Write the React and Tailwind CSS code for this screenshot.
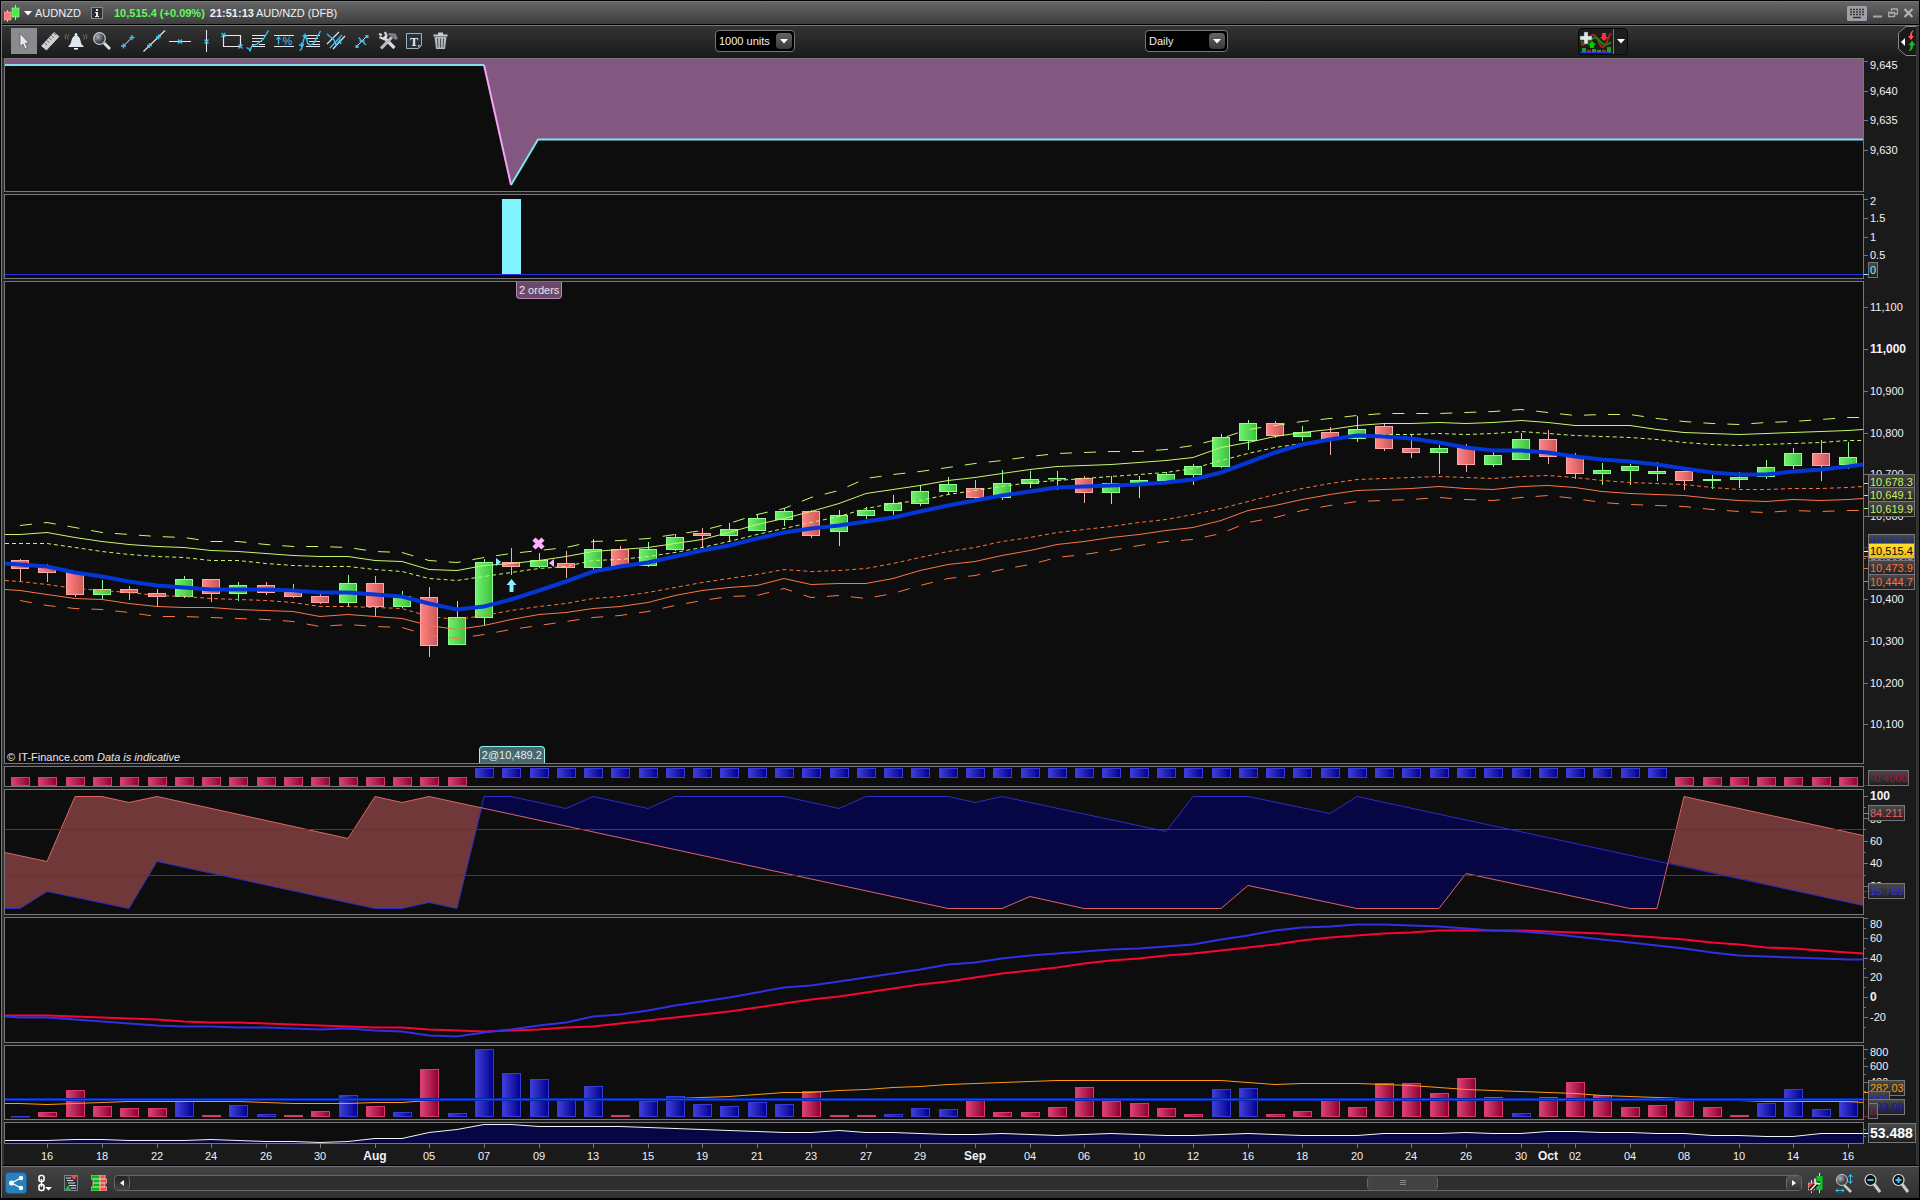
import { useMemo } from 'react';

const LEFT = 5;
const RIGHT = 1863;
const barX = (i) => Math.round(20.2 + 27.28 * i);

// [direction, high, body top, body bottom, low]
const candles = [
  ['d', 559, 560, 569, 581], ['d', 564, 567, 573, 582], ['d', 571, 572, 595, 597], ['u', 580, 589, 595, 599],
  ['d', 586, 589, 593, 600], ['d', 589, 593, 597, 606], ['u', 576, 579, 597, 598], ['d', 579, 579, 594, 602],
  ['u', 582, 585, 594, 601], ['d', 582, 585, 593, 595], ['d', 584, 592, 597, 598], ['d', 594, 596, 603, 604],
  ['u', 575, 583, 603, 606], ['d', 576, 583, 607, 616], ['u', 591, 596, 607, 608], ['d', 587, 597, 646, 657],
  ['u', 601, 617, 645, 645], ['u', 559, 562, 618, 626], ['d', 548, 562, 567, 575], ['u', 553, 560, 567, 568],
  ['d', 551, 563, 568, 578], ['u', 539, 549, 568, 570], ['d', 546, 549, 566, 567], ['u', 542, 549, 566, 567],
  ['u', 534, 537, 550, 551], ['d', 528, 533, 536, 548], ['u', 523, 529, 536, 541], ['u', 514, 518, 531, 531],
  ['u', 508, 511, 520, 526], ['d', 510, 511, 536, 538], ['u', 510, 515, 532, 546], ['u', 507, 510, 516, 519],
  ['u', 495, 503, 511, 515], ['u', 485, 491, 504, 506], ['u', 477, 484, 492, 494], ['d', 480, 488, 498, 499],
  ['u', 470, 483, 498, 500], ['u', 471, 479, 484, 488], ['u', 471, 478, 479, 490], ['d', 476, 478, 493, 503],
  ['u', 476, 483, 493, 504], ['u', 476, 480, 485, 498], ['u', 472, 474, 481, 481], ['u', 464, 466, 475, 485],
  ['u', 434, 437, 467, 468], ['u', 420, 423, 441, 450], ['d', 421, 423, 436, 438], ['u', 426, 432, 437, 441],
  ['d', 427, 432, 439, 455], ['u', 416, 429, 439, 442], ['d', 424, 426, 449, 451], ['d', 435, 448, 453, 458],
  ['u', 445, 448, 453, 474], ['d', 444, 448, 465, 472], ['u', 450, 455, 465, 467], ['u', 433, 439, 460, 460],
  ['d', 430, 439, 457, 464], ['d', 453, 456, 474, 479], ['u', 463, 470, 474, 485], ['u', 464, 466, 471, 485],
  ['u', 462, 471, 474, 481], ['d', 470, 471, 481, 490], ['u', 475, 479, 481, 489], ['u', 472, 477, 480, 488],
  ['u', 460, 467, 477, 479], ['u', 448, 453, 466, 469], ['d', 440, 453, 466, 481], ['u', 442, 457, 465, 469],
];

const upperOuter = [525, 522, 527, 532, 534, 536, 537, 541, 541, 544, 546, 546, 547, 551, 552, 560, 562, 557, 553, 550, 547, 541, 540, 538, 534, 530, 523, 514, 508, 497, 490, 478, 474, 471, 467, 463, 460, 456, 453, 452, 451, 451, 449, 445, 438, 429, 425, 421, 418, 415, 413, 413, 413, 412, 411, 409, 412, 415, 414, 414, 418, 421, 423, 424, 422, 421, 419, 417];
const upperMid = [534, 532, 537, 541, 544, 546, 547, 550, 551, 553, 555, 556, 556, 560, 561, 569, 570, 565, 563, 560, 556, 551, 549, 547, 543, 539, 532, 524, 518, 511, 503, 493, 489, 485, 480, 477, 473, 469, 466, 465, 464, 462, 460, 457, 447, 442, 436, 432, 429, 425, 423, 423, 422, 423, 422, 420, 422, 425, 425, 425, 429, 432, 433, 434, 433, 432, 431, 430];
const upperInner = [543, 543, 547, 551, 554, 556, 557, 560, 560, 563, 565, 566, 566, 569, 571, 578, 580, 576, 572, 568, 566, 560, 559, 556, 552, 547, 541, 534, 528, 522, 516, 508, 503, 500, 494, 490, 486, 482, 480, 478, 476, 474, 472, 468, 460, 453, 447, 443, 438, 435, 434, 434, 433, 434, 433, 431, 433, 435, 436, 437, 439, 442, 444, 445, 444, 443, 442, 440];
const average = [564, 566, 572, 576, 581, 585, 587, 589, 589, 589, 590, 592, 592, 594, 596, 603, 609, 606, 599, 590, 581, 571, 566, 562, 556, 550, 545, 538, 532, 528, 525, 521, 517, 511, 505, 500, 495, 491, 487, 486, 485, 484, 482, 479, 472, 462, 452, 444, 439, 435, 436, 438, 442, 447, 450, 450, 452, 456, 459, 461, 464, 468, 472, 474, 474, 471, 469, 466];
const lowerInner = [581, 584, 588, 590, 592, 595, 596, 598, 599, 600, 602, 606, 606, 607, 608, 616, 619, 615, 610, 606, 603, 598, 596, 592, 587, 582, 578, 574, 569, 571, 570, 568, 563, 557, 551, 547, 541, 537, 532, 529, 526, 522, 519, 514, 508, 501, 494, 488, 483, 479, 478, 477, 476, 477, 478, 476, 475, 477, 480, 482, 483, 484, 487, 489, 489, 488, 488, 487];
const lowerMid = [590, 594, 598, 599, 603, 606, 607, 607, 609, 610, 611, 616, 614, 616, 618, 625, 629, 625, 619, 614, 612, 608, 606, 602, 595, 590, 587, 585, 578, 584, 583, 583, 578, 570, 564, 561, 555, 550, 544, 541, 537, 534, 530, 527, 520, 510, 505, 499, 494, 490, 489, 488, 486, 488, 489, 486, 485, 487, 491, 493, 494, 495, 498, 500, 501, 499, 500, 499];
const lowerOuter = [600, 605, 608, 609, 612, 616, 616, 617, 618, 619, 621, 626, 624, 626, 627, 635, 638, 634, 629, 625, 621, 617, 615, 611, 605, 600, 596, 595, 588, 597, 595, 598, 593, 585, 578, 575, 569, 564, 557, 554, 550, 545, 541, 539, 533, 522, 517, 510, 505, 501, 500, 499, 497, 499, 500, 497, 495, 498, 502, 504, 505, 506, 509, 511, 512, 510, 511, 510];

const trendSlow = [1015, 1015, 1016, 1017, 1018, 1019, 1021, 1022, 1022, 1023, 1024, 1025, 1026, 1027, 1027, 1029, 1030, 1031, 1030, 1029, 1027, 1026, 1023, 1020, 1017, 1014, 1011, 1007, 1003, 999, 996, 992, 988, 984, 981, 977, 973, 970, 967, 963, 960, 958, 955, 953, 950, 947, 944, 940, 937, 935, 933, 932, 930, 930, 930, 930, 931, 932, 933, 935, 937, 939, 942, 944, 947, 948, 950, 952];
const trendFast = [1017, 1017, 1019, 1021, 1023, 1025, 1026, 1026, 1027, 1027, 1028, 1029, 1028, 1030, 1031, 1035, 1036, 1032, 1029, 1025, 1022, 1016, 1014, 1010, 1005, 1001, 997, 992, 987, 985, 981, 977, 973, 969, 964, 962, 958, 955, 953, 951, 949, 948, 946, 944, 939, 935, 930, 927, 926, 924, 924, 925, 926, 928, 930, 931, 933, 936, 939, 942, 945, 948, 952, 955, 956, 957, 958, 959];

const volumeTops = [1116, 1112, 1090, 1106, 1108, 1108, 1100, 1115, 1105, 1114, 1115, 1111, 1095, 1106, 1112, 1069, 1113, 1049, 1073, 1079, 1099, 1086, 1115, 1101, 1096, 1104, 1106, 1102, 1104, 1091, 1115, 1115, 1114, 1108, 1109, 1098, 1112, 1112, 1107, 1087, 1101, 1103, 1108, 1114, 1089, 1088, 1114, 1111, 1099, 1107, 1083, 1083, 1093, 1078, 1097, 1113, 1097, 1082, 1095, 1107, 1105, 1100, 1107, 1115, 1103, 1089, 1109, 1101];
const volumeUp = new Set([0, 6, 8, 9, 12, 14, 16, 17, 18, 19, 20, 21, 23, 24, 25, 26, 27, 28, 32, 33, 34, 44, 45, 55, 64, 65, 66, 67]);
const volumeAverage = [1103, 1104, 1103, 1102, 1101, 1101, 1101, 1101, 1101, 1102, 1103, 1103, 1103, 1102, 1102, 1100, 1099, 1099, 1099, 1099, 1099, 1098, 1098, 1098, 1098, 1097, 1096, 1094, 1092, 1092, 1090, 1089, 1087, 1086, 1084, 1083, 1082, 1081, 1080, 1080, 1080, 1080, 1080, 1080, 1080, 1082, 1084, 1083, 1083, 1083, 1084, 1085, 1087, 1089, 1090, 1091, 1092, 1093, 1095, 1096, 1097, 1098, 1099, 1100, 1101, 1101, 1101, 1101];
const strength = [1140, 1140, 1139, 1139, 1140, 1140, 1140, 1139, 1140, 1141, 1141, 1142, 1141, 1138, 1138, 1132, 1129, 1124, 1124, 1126, 1126, 1126, 1126, 1127, 1128, 1129, 1130, 1131, 1132, 1132, 1130, 1132, 1132, 1133, 1134, 1134, 1133, 1134, 1135, 1134, 1133, 1134, 1135, 1135, 1134, 1133, 1134, 1135, 1135, 1135, 1133, 1133, 1133, 1132, 1133, 1133, 1131, 1131, 1132, 1132, 1133, 1133, 1135, 1135, 1136, 1136, 1133, 1133];

// aroon turning points: [bar index, y]
const aroonDown = [[-0.56, 852], [1, 861], [2, 796], [3, 796], [4, 802], [5, 796], [12, 838], [13, 796], [14, 802], [15, 796], [34, 908], [36, 908], [37, 896], [39, 908], [44, 908], [45, 885], [49, 908], [52, 908], [53, 873], [59, 908], [60, 908], [61, 796], [67.55, 835]];
const aroonUp = [[-0.56, 908], [0, 908], [1, 891], [4, 908], [5, 861], [13, 908], [14, 908], [15, 902], [16, 908], [17, 796], [18, 796], [20, 808], [21, 796], [23, 808], [24, 796], [28, 796], [30, 808], [31, 796], [34, 796], [35, 802], [36, 796], [42, 831], [43, 796], [45, 796], [48, 813], [49, 796], [67.55, 905]];

const toPoints = (pairs) => pairs.map(([i, y]) => `${barX(i)},${y + 0.5}`);
const seriesPoints = (ys, first, last) => {
  const pts = ys.map((y, i) => `${barX(i)},${y + 0.5}`);
  if (first) pts.unshift(`${LEFT},${first + 0.5}`);
  if (last) pts.push(`${RIGHT},${last + 0.5}`);
  return pts.join(' ');
};

const between = (a, b, from, to, start, end) => {
  const pick = (list) => toPoints(list.filter(([i]) => i > from && i < to));
  return [start, ...pick(a), end, ...pick(b).reverse()].filter(Boolean).join(' ');
};

const dates = [
  [1, '16'], [3, '18'], [5, '22'], [7, '24'], [9, '26'], [11, '30'], [13, 'Aug'], [15, '05'], [17, '07'], [19, '09'], [21, '13'],
  [23, '15'], [25, '19'], [27, '21'], [29, '23'], [31, '27'], [33, '29'], [35, 'Sep'], [37, '04'], [39, '06'], [41, '10'], [43, '12'],
  [45, '16'], [47, '18'], [49, '20'], [51, '24'], [53, '26'], [55, '30'], [56, 'Oct'], [57, '02'], [59, '04'], [61, '08'], [63, '10'],
  [65, '14'], [67, '16'],
];

function Line({ points, color, width = 1, dash }) {
  return <polyline points={points} fill="none" stroke={color} strokeWidth={width} strokeDasharray={dash} />;
}

function Axis({ top, height, labels = [], ticks = [], tags = [] }) {
  return (
    <svg className="block h-full w-[52px] shrink-0" viewBox={`0 ${top} 52 ${height}`} preserveAspectRatio="none" fontSize="11">
      {ticks.map((y) => <rect key={y} x="0" y={y} width="2" height="1" fill="#77777b" />)}
      {labels.map(([text, y, bold, tickY]) => (
        <g key={text}>
          <rect x="0" y={tickY ?? y} width="4" height="1" fill="#77777b" />
          <text x="6" y={y + 4} fill="#f2f2f8" fontSize={bold ? 12 : 11} fontWeight={bold ? 700 : 400}>{text}</text>
        </g>
      ))}
      {tags.map(({ text, y, w = 46, color, tick, yellow, big }) => (
        <g key={text}>
          {tick && <rect x="0" y={tick} width="4" height="1" fill={color} />}
          <rect x="4.5" y={y + 0.5} width={w} height={big ? 19 : 15} fill={yellow ? 'url(#gold)' : 'url(#tag)'} stroke="#77777b" />
          <text x="6" y={y + (big ? 15 : 12)} fill={yellow ? '#000' : color} fontSize={big ? 14 : 11} fontWeight={big ? 700 : 400}>{text}</text>
        </g>
      ))}
    </svg>
  );
}

function Panel({ size, top, height, axis, overlay, children }) {
  return (
    <div className={`flex ${size}`}>
      <div className="relative min-w-0 flex-1 border border-[#77777b] bg-[#0d0d0d]">
        <svg className="block size-full" viewBox={`${LEFT} ${top} 1858 ${height}`} preserveAspectRatio="none">{children}</svg>
        {overlay}
      </div>
      <Axis top={top - 1} height={height + 2} {...axis} />
    </div>
  );
}

const C = '#35c5f5';
const W = '#e4e6ea';
const Cross = ({ x, y }) => <path d={`M${x - 2} ${y - 2}l4 4m0-4l-4 4`} stroke={C} strokeWidth="1.3" />;
const Plus = ({ x, y }) => <path d={`M${x - 2.5} ${y}h5m-2.5-2.5v5`} stroke={C} strokeWidth="1.3" />;

const tools = [
  ['Select', <path d="M9 5.500v13l3-2.500 2 5 2.300-1-2-5h3.700z" fill="#e6e9ee" stroke="#444" strokeWidth=".6" />],
  ['Measure', <g><path d="M4.500 18L17 4.500l5 4L9.500 22z" fill="#cdd1d6" stroke="#f5f5f5" strokeWidth=".6" /><path d="M7.500 15l2.500 2m-.2-4.500l2.500 2m-.2-4.500l2.500 2m-.2-4.500l2.500 2m-.2-4.500l2.500 2" stroke="#5b6066" /></g>],
  ['Alerts', <g><path d="M5.500 18c4-2 1.500-9 7.500-11 6 2 3.500 9 7.500 11v1h-15z" fill="#dfe6f0" /><path d="M11 20h4v1.500h-4z" fill="#fff" /><circle cx="13" cy="6.500" r="1.300" fill="#fff" /><path d="M6 6.500q-2 2-1 5M3.500 6q-2 2-1 5M20 6.500q2 2 1 5M22.500 6q2 2 1 5" fill="none" stroke="#7b8188" strokeWidth=".8" /></g>],
  ['Zoom', <g><path d="M15 15l6 6" stroke="#ddd" strokeWidth="3" /><circle cx="10.500" cy="10.500" r="5.800" fill="url(#lens)" stroke="#c9ccd0" strokeWidth="1.200" /></g>],
  ['Segment', <g><path d="M8 18.500l9-9" stroke={W} /><Plus x={8.5} y={18} /><Plus x={17} y={9.5} /></g>],
  ['Line', <g><path d="M2.500 23.500L24 2.500" stroke={W} strokeWidth="1.200" /><Plus x={8.5} y={17.5} /><Plus x={17.5} y={9} /></g>],
  ['Horizontal line', <g><path d="M2 13.500h22" stroke={W} /><Cross x={13} y={13.5} /></g>],
  ['Vertical line', <g><path d="M13.500 2v22" stroke={W} /><Cross x={13.5} y={13.5} /></g>],
  ['Rectangle', <g><path d="M4.500 7.500h17v11h-17z" fill="none" stroke={W} strokeWidth="1.200" /><Cross x={4.5} y={7} /><Cross x={21.5} y={18.5} /></g>],
  ['Fibonacci retracement', <g><path d="M7 7.500h13m-13 3h12m-12 3h10m-10 3h4m3 0h6m-13 2h13" stroke={W} /><path d="M1.500 20q3-.5 3.500 3.500 1-6 4-6.500t4-1.500 5-4L23.500 2.500" fill="none" stroke={C} strokeWidth="1.400" /></g>],
  ['Percent', <g><path d="M3 7.500h20M3 18.500h20" stroke={W} /><path d="M7.500 16.500v-7m-2 2l2-2.500 2 2.500" fill="none" stroke={C} strokeWidth="1.200" /><text x="11.500" y="17" fontSize="11" fill={C}>%</text></g>],
  ['Fibonacci extension', <g><path d="M9 7.500h14m-14 3h12m-9 3h11m-11 3h11m-14 2h14" stroke={W} /><path d="M2.500 22q2 1 3-5t2.500-9q2 2 2.500 7 2 3 5 1t3-4l5-9" fill="none" stroke={C} strokeWidth="1.400" /><Plus x={4.5} y={17} /><Plus x={8} y={8} /></g>],
  ['Channel', <g><path d="M4 16L16 4M10 21L22 8" stroke={W} strokeWidth="1.200" /><path d="M4 6l7 6 2 5 4-5 1 4M7 20L19 7" stroke={C} fill="none" strokeWidth="1.300" /></g>],
  ['Regression', <g><path d="M8 18L18 8" stroke={W} /><path d="M6.500 17h3v3h-3zM16.500 7h3v3h-3z" fill={C} /><path d="M9.500 9.500l7.500 7.500M10.500 13h5" stroke={C} strokeWidth="1.300" /></g>],
  ['Settings', <g><path d="M8.500 9l11 11" stroke="#d8dade" strokeWidth="3.200" /><path d="M4.500 9l4 2 3-3-1.500-4M4 6l3 1" fill="none" stroke="#d8dade" strokeWidth="2.200" /><path d="M6 20.500L17 9" stroke="#b9bdc2" strokeWidth="3.200" /><path d="M13.500 5l7 .5 2.500 5-3 1.500-3-4-4-1z" fill="#7d8187" /></g>],
  ['Text', <g><path d="M5.500 5.500h15v12l-3 3h-12z" fill="#27313a" stroke="#9eb0bd" /><path d="M20 17h-3v3z" fill="#9eb0bd" /><text x="13" y="17.500" textAnchor="middle" fontSize="12" fontWeight="700" fontFamily="Liberation Serif, serif" fill="#e8edf0">T</text></g>],
  ['Delete', <g><path d="M7.500 9h12l-1.500 12h-9z" fill="#b4b7bb" /><path d="M6.500 6.500h14v2h-14zM11 4.500h5v2h-5z" fill="#c9ccd0" /><path d="M10.500 10.500l.5 9M13.500 10.500v9M16.500 10.500l-.5 9" stroke="#4b4e52" /></g>],
];

function DropDown({ label, value, width }) {
  return (
    <label className={`relative block h-[22px] shrink-0 ${width}`}>
      <select aria-label={label} defaultValue={value} className="block size-full appearance-none rounded-sm border border-[#77777b] bg-black pl-[3px] text-[11px] text-[#f0f0f5] outline-none">
        <option>{value}</option>
      </select>
      <span className="pointer-events-none absolute top-[3px] right-[3px] flex h-4 w-4 items-center justify-center rounded-sm bg-linear-to-b from-[#666] to-[#3a3a3a]">
        <svg width="8" height="5"><path d="M0 0h8L4 4.500z" fill="#fff" /></svg>
      </span>
    </label>
  );
}

function TitleBar() {
  return (
    <header className="flex h-[22px] items-center bg-linear-to-b from-[#666] to-[#3d3d3d] pr-[6px] pl-[2px] text-[11px] text-[#eef0f5]">
      <svg width="16" height="18" viewBox="0 0 16 18">
        <path d="M3.500 6v12M11.500 1v15" stroke="#ccc" />
        <rect x="0" y="8" width="7" height="8" fill="#f77" stroke="#fbb" strokeWidth=".6" />
        <rect x="8" y="4" width="7" height="9" fill="#4e4" stroke="#afa" strokeWidth=".6" />
      </svg>
      <svg className="ml-1" width="8" height="5"><path d="M0 0h8L4 4.500z" fill="#fff" /></svg>
      <span className="ml-[3px] w-[45px]">AUDNZD</span>
      <button aria-label="Info" className="ml-[11px] flex h-3 w-3 items-center justify-center border border-[#8a8a90] bg-[#2c2c34]">
        <svg width="6" height="8"><path d="M2 0h2v2H2zM1 3h3v4h1v1H1V7h1V4H1z" fill="#e8e8ee" /></svg>
      </button>
      <span className="ml-[11px] font-bold text-[#5dfc5d]">10,515.4 (+0.09%)</span>
      <span className="ml-[5px] font-bold">21:51:13</span>
      <span className="ml-[2px]">AUD/NZD (DFB)</span>
      <div className="ml-auto flex items-center gap-[6px]">
        <button aria-label="Keyboard">
          <svg className="block" width="20" height="15" viewBox="0 0 20 15">
            <rect width="20" height="15" rx="1.500" fill="#a0a0a8" />
            <path d="M3 3.500h14M3 6h14M3 8.500h14" stroke="#333" strokeWidth="1.500" strokeDasharray="2 1" />
            <path d="M6 11.500h8" stroke="#333" strokeWidth="1.500" />
          </svg>
        </button>
        <button aria-label="Minimize"><svg className="block" width="9" height="10"><path d="M0 8.500h9" stroke="#a8a8ae" strokeWidth="2" /></svg></button>
        <button aria-label="Restore">
          <svg className="block" width="10" height="10"><path d="M3.500 3V1h6v5H7M.5 4.500h6v4h-6zM0 5h7" fill="none" stroke="#a8a8ae" strokeWidth="1.400" /></svg>
        </button>
        <button aria-label="Close"><svg className="block" width="9" height="10"><path d="M.5 1l8 8m0-8l-8 8" stroke="#b4b4ba" strokeWidth="2" /></svg></button>
      </div>
    </header>
  );
}

function Toolbar() {
  return (
    <div className="flex h-8 items-center bg-linear-to-b from-[#343434] to-[#1a1a1a] pb-[2px] pl-[9px]">
      {tools.map(([name, icon], i) => (
        <button key={name} aria-label={name} title={name} className={`size-[26px] shrink-0 ${i === 0 ? 'bg-[#8b8a90]' : ''}`}>
          <svg className="block" width="26" height="26" viewBox="0 0 26 26">{icon}</svg>
        </button>
      ))}
      <div className="grow-[262]" />
      <DropDown label="Units" value="1000 units" width="w-20" />
      <div className="grow-[350]" />
      <DropDown label="Timeframe" value="Daily" width="w-[83px]" />
      <div className="grow-[350]" />
      <div className="flex h-[27px] shrink-0 items-center rounded-sm border border-[#0a0a0a] bg-[#1d1d1d]">
        <button aria-label="Add indicator">
          <svg className="block" width="34" height="25" viewBox="0 0 34 25">
            <path d="M2 15c5 4 8-11 13-9s5 13 9 12 4-9 8-14" fill="none" stroke="#a22" strokeWidth="2" />
            <path d="M2 12c6 8 12-8 17-2s8 8 13 3" fill="none" stroke="#181" strokeWidth="2" />
            <path d="M5 3h4v4h4v4H9v4H5v-4H1V7h4z" fill="#e4e6ea" stroke="#555" strokeWidth=".5" />
            <path d="M11 19v-3H9l4-4 4 4h-2v3z" fill="#0c0" />
            <path d="M23 4h4v4h2l-4 4-4-4h2z" fill="#f33" />
            <path d="M3 19h4v4H3zM13 20h4v3h-4zM18 21h4v2h-4zM28 18h4v5h-4z" fill="#1a1" />
            <path d="M8 21h4v2H8zM23 21h4v2h-4z" fill="#b22" />
            <path d="M1 23.500h32" stroke="#33d" />
          </svg>
        </button>
        <button aria-label="Indicator list" className="flex h-full w-[14px] items-center justify-center border-l border-[#77777b]">
          <svg width="8" height="5"><path d="M0 0h8L4 4.500z" fill="#fff" /></svg>
        </button>
      </div>
      <div className="grow-[270]" />
      <button aria-label="Open order panel" className="shrink-0">
        <svg className="block" width="18" height="30" viewBox="0 0 18 30">
          <path d="M18 .5H8L.5 7v16L8 29.500h10" fill="#1a1a1a" stroke="#88888c" />
          <path d="M7 12v8l-4-4z" fill="#fff" />
          <path d="M16 4q-4 1-4 6h-2l3 4 3-4h-2q0-4 2-6z" fill="#f55" />
          <path d="M11 25q4-1 4-6h2l-3-4-3 4h2q0 4-2 6z" fill="#2b2" stroke="#2b2" strokeWidth=".5" />
        </svg>
      </button>
    </div>
  );
}

function PricePanel() {
  return (
    <Panel
      size="min-h-0 flex-1"
      top={282}
      height={481}
      axis={{
        labels: [
          ['11,100', 307], ['11,000', 349, true], ['10,900', 391], ['10,800', 433], ['10,700', 474], ['10,600', 516],
          ['10,400', 599], ['10,300', 641], ['10,200', 683], ['10,100', 724],
        ],
        ticks: [558],
        tags: [
          { text: '10,678.3', y: 474, color: '#c8f060', tick: 483 },
          { text: '10,649.1', y: 487, color: '#c8f060', tick: 495 },
          { text: '10,619.9', y: 501, color: '#c8f060', tick: 508 },
          { text: '10,526.6', y: 534, color: '#1238d0', tick: 547 },
          { text: '10,503.1', y: 548, color: '#ff7040', tick: 556 },
          { text: '10,515.4', y: 543, color: '#fff', tick: 551, yellow: true },
          { text: '10,473.9', y: 560, color: '#ff7040', tick: 568 },
          { text: '10,444.7', y: 574, color: '#ff7040', tick: 581 },
        ],
      }}
      overlay={
        <>
          <span className="absolute top-0 left-[27.5%] rounded-b-sm border border-t-0 border-[#b58ab3] bg-[#6b4a69] px-[2px] text-[11px] leading-4 text-[#ece4ee]">2 orders</span>
          <span className="absolute bottom-0 left-[25.5%] rounded-t-sm border border-b-0 border-[#8ff0fa] bg-[#47696e] px-[2px] text-[11px] leading-4 text-[#e4eef0]">2@10,489.2</span>
          <p className="absolute bottom-0 left-[2px] text-[11px] leading-3 text-[#e8e8ee]">© IT-Finance.com <i>Data is indicative</i></p>
        </>
      }
    >
      {candles.map(([dir, high, top, bottom, low], i) => {
        const x = barX(i);
        const up = dir === 'u';
        return (
          <g key={i}>
            <rect x={x} y={high} width="1" height={low - high} fill={up ? '#8dff8d' : '#ffa8a8'} />
            <rect
              x={x - 8.5}
              y={top + 0.5}
              width="17"
              height={Math.max(bottom - top - 1, 0.5)}
              fill={up ? 'url(#green)' : 'url(#red)'}
              stroke={up ? '#8dff8d' : '#ffa8a8'}
            />
          </g>
        );
      })}
      <Line points={seriesPoints(upperOuter, 0, 417)} color="#c8f86a" dash="12 12" />
      <Line points={seriesPoints(upperMid, 534, 429)} color="#c8f86a" />
      <Line points={seriesPoints(upperInner, 543, 440)} color="#c8f86a" dash="4 3" />
      <Line points={seriesPoints(lowerInner, 580, 486)} color="#fc7640" dash="4 3" />
      <Line points={seriesPoints(lowerMid, 589, 498)} color="#fc7640" />
      <Line points={seriesPoints(lowerOuter, 0, 510)} color="#fc7640" dash="12 12" />
      <Line points={seriesPoints(average, 563, 464)} color="#0436d6" width="4" />
      <path d="M496 558v8l5-4z" fill="#7ff4ff" />
      <path d="M554 559v8l-5-4z" fill="#ffb0ff" />
      <path d="M511.500 579l5 6h-3v7h-4v-7h-3z" fill="#7ff4ff" />
      <path d="M534 539l9 9m0-9l-9 9" stroke="#ffb0ff" strokeWidth="4.500" />
    </Panel>
  );
}

function BottomBar() {
  return (
    <footer className="flex h-[31px] items-center bg-linear-to-b from-[#444] to-[#303030] pr-[10px] pl-[3px]">
      <button aria-label="Share" className="flex size-[22px] items-center justify-center rounded-sm border border-[#1a5e92] bg-[#2a80bd]">
        <svg width="16" height="16" viewBox="0 0 16 16">
          <path d="M13 3L3.500 8 13 13" fill="none" stroke="#fff" strokeWidth="1.300" />
          <circle cx="13" cy="3" r="2.200" fill="#fff" /><circle cx="3.500" cy="8" r="2.500" fill="#fff" /><circle cx="13" cy="13" r="2.200" fill="#fff" />
        </svg>
      </button>
      <button aria-label="Link" className="ml-[10px]">
        <svg className="block" width="16" height="18" viewBox="0 0 16 18">
          <rect x="2" y="1.500" width="5" height="6" rx="2" fill="none" stroke="#fff" strokeWidth="1.600" />
          <rect x="2" y="10.500" width="5" height="6" rx="2" fill="none" stroke="#fff" strokeWidth="1.600" />
          <path d="M4.500 5v8" stroke="#fff" strokeWidth="1.500" /><path d="M8 13h7l-3.500 3.500z" fill="#fff" />
        </svg>
      </button>
      <button aria-label="Orders" className="ml-[11px]">
        <svg className="block" width="14" height="16" viewBox="0 0 14 16">
          <rect x=".5" y=".5" width="13" height="15" fill="#33383f" stroke="#77828c" />
          <path d="M2 3h5M3 5.500h6M4 8h7M5 10.500h7M7 13h5" stroke="#d5dadf" /><path d="M7 1h6l-3 4z" fill="#f44" /><path d="M1 15l3-5 3 5z" fill="#0c2" />
        </svg>
      </button>
      <button aria-label="Market depth" className="ml-[13px]">
        <svg className="block" width="16" height="16" viewBox="0 0 16 16">
          <path d="M0 0h9v4H0zM2 4h7v4H2zM2 8h7v4H2zM0 12h9v4H0z" fill="#0b0" stroke="#ccc" strokeWidth=".8" />
          <path d="M9 0h5v4H9zM9 4h7v4H9zM9 8h5v4H9zM9 12h7v4H9z" fill="#f44" stroke="#ccc" strokeWidth=".8" />
        </svg>
      </button>
      <div className="ml-[7px] flex h-4 flex-1 rounded-sm border border-[#68686c] bg-[#2e2e2e]">
        <button aria-label="Scroll left" className="flex w-[15px] items-center justify-center rounded-sm border-r border-[#68686c] bg-linear-to-b from-[#222] to-[#444]">
          <svg width="4" height="6"><path d="M4 0v6L0 3z" fill="#fff" /></svg>
        </button>
        <div className="flex flex-1">
          <div className="w-[74.7%]" />
          <button aria-label="Scroll position" className="flex w-[4.3%] items-center justify-center rounded-sm border-x border-[#68686c] bg-[#434343]">
            <svg width="6" height="6"><path d="M0 .5h6M0 2.500h6M0 4.500h6" stroke="#888" /></svg>
          </button>
        </div>
        <button aria-label="Scroll right" className="flex w-[15px] items-center justify-center rounded-sm border-l border-[#68686c] bg-linear-to-b from-[#555] to-[#333]">
          <svg width="4" height="6"><path d="M0 0v6l4-3z" fill="#fff" /></svg>
        </button>
      </div>
      <div className="ml-[6px] flex items-center gap-[11px]">
        <button aria-label="Chart settings">
          <svg className="block" width="16" height="20" viewBox="0 0 16 20">
            <path d="M3.500 7v13M11.500 0v20" stroke="#ddd" /><rect x=".5" y="10" width="6" height="7" fill="#f33" stroke="#fbb" strokeWidth=".6" /><rect x="8.500" y="3" width="6" height="14" fill="#0c2" />
            <path d="M2 17l6-6 4-1" stroke="#111" strokeWidth="4" fill="none" /><path d="M2.500 17l6-6.500M7 5.500v4.500l5 1" stroke="#e4e4e4" strokeWidth="1.800" fill="none" />
          </svg>
        </button>
        <button aria-label="Auto scale">
          <svg className="block" width="18" height="20" viewBox="0 0 18 20">
            <path d="M9 12l7 7" stroke="#ccc" strokeWidth="2.500" /><circle cx="7" cy="7" r="5.500" fill="url(#lens)" stroke="#ccc" />
            <path d="M15.500 2v8m-2-6l2-2.500 2 2.500m-4 4l2 2.500 2-2.500M1 17.500h8m-6-2l-2 2 2 2m4-4l2 2-2 2" stroke={C} fill="none" />
          </svg>
        </button>
        {['out', 'in'].map((dir) => (
          <button key={dir} aria-label={`Zoom ${dir}`}>
            <svg className="block" width="17" height="20" viewBox="0 0 17 20">
              <path d="M10 11l6 8" stroke="#ccc" strokeWidth="3" /><circle cx="6.500" cy="7" r="5.500" fill="#101010" stroke="#ddd" strokeWidth="1.200" />
              <path d={dir === 'in' ? 'M3.500 7h6M6.500 4v6' : 'M3.500 7h6'} stroke={C} strokeWidth="2" />
            </svg>
          </button>
        ))}
      </div>
    </footer>
  );
}

export default function App() {
  const aroonFills = useMemo(() => [
    [between(aroonDown, aroonUp, -1, 16.9, null, '482,808'), '#703838'],
    [between(aroonUp, aroonDown, 16.9, 60.4, '482,808', '1669,863'), '#060645'],
    [between(aroonDown, aroonUp, 60.4, 68, '1669,863', null), '#703838'],
  ], []);

  return (
    <div className="flex h-screen flex-col bg-black px-px pt-px pb-[2px] font-['Liberation_Sans',Arial,sans-serif]">
      <svg className="absolute size-0">
        <defs>
          <linearGradient id="green"><stop stopColor="#70f270" /><stop offset="1" stopColor="#3fbf3f" /></linearGradient>
          <linearGradient id="red"><stop stopColor="#ff8686" /><stop offset="1" stopColor="#cc5656" /></linearGradient>
          <linearGradient id="blue"><stop stopColor="#4040dc" /><stop offset="1" stopColor="#00008c" /></linearGradient>
          <linearGradient id="crimson"><stop stopColor="#de4478" /><stop offset="1" stopColor="#8c0030" /></linearGradient>
          <linearGradient id="tag" x2="0" y2="1"><stop stopColor="#4a4a4a" /><stop offset="1" stopColor="#1e1e1e" /></linearGradient>
          <linearGradient id="gold" x2="0" y2="1"><stop stopColor="#ffe030" /><stop offset="1" stopColor="#f0b810" /></linearGradient>
          <radialGradient id="lens" cx=".35" cy=".35"><stop stopColor="#aab0b6" /><stop offset="1" stopColor="#3c4146" /></radialGradient>
        </defs>
      </svg>
      <div className="flex min-h-0 flex-1 flex-col border-t border-l border-[#77777b]">
        <TitleBar />
        <div className="flex min-h-0 flex-1 flex-col border-t border-black">
          <div className="border-t border-[#77777b] bg-[#333] pr-[3px]">
            <Toolbar />
          </div>
          <main className="flex min-h-0 flex-1 flex-col gap-[2px] border-r-3 border-l-2 border-[#333] bg-[#1a1a1a]">
            <Panel size="h-[134px]" top={59} height={132} axis={{ labels: [['9,645', 65, false, 61], ['9,640', 91], ['9,635', 120], ['9,630', 150]] }}>
              <path d="M5 59V65H484L511 184 538 139H1863V59z" fill="#825780" />
              <path d="M5 65H484M511 185L538 139.500H1863" fill="none" stroke="#7fe4f0" strokeWidth="2" />
              <path d="M484 65L511 185" stroke="#f4a4f4" strokeWidth="2" />
            </Panel>
            <Panel
              size="h-[85px]"
              top={195}
              height={83}
              axis={{
                labels: [['2', 201, false, 199], ['1.5', 218], ['1', 237], ['0.5', 255]],
                tags: [{ text: '0', y: 262, w: 9, color: '#7ff4ff', tick: 274 }],
              }}
            >
              <rect x="5" y="274" width="1858" height="1" fill="#2c2ce0" />
              <rect x="502" y="199" width="19" height="75" fill="#7ff4ff" />
            </Panel>
            <PricePanel />
            <Panel size="h-[21px]" top={767} height={19} axis={{ tags: [{ text: '-0.4000', y: 770, w: 40, color: '#9c1440', tick: 785 }] }}>
              {candles.map((_, i) => {
                const up = i > 16 && i < 61;
                return (
                  <rect key={i} x={barX(i) - 8.5} y={up ? 768.5 : 777.5} width="18" height={up ? 9 : 8} fill={up ? 'url(#blue)' : 'url(#crimson)'} stroke={up ? '#3a3ad8' : '#d83a6c'} />
                );
              })}
            </Panel>
            <Panel
              size="h-[126px]"
              top={790}
              height={124}
              axis={{
                labels: [['100', 796, true], ['80', 819, false, 818], ['60', 841], ['40', 863], ['20', 886]],
                ticks: [807, 829, 852, 875, 897],
                tags: [
                  { text: '84.211', y: 805, w: 36, color: '#e06464', tick: 813 },
                  { text: '15.789', y: 883, w: 36, color: '#3434e0', tick: 891 },
                ],
              }}
            >
              {aroonFills.map(([points, fill]) => <polygon key={points} points={points} fill={fill} />)}
              <Line points={toPoints(aroonUp).join(' ')} color="#2c2cc8" />
              <Line points={toPoints(aroonDown).join(' ')} color="#e06464" />
              <rect x="5" y="829" width="1858" height="1" fill="#2c2ce0" />
              <rect x="5" y="875" width="1858" height="1" fill="#2c2ce0" />
            </Panel>
            <Panel
              size="h-[126px]"
              top={918}
              height={124}
              axis={{
                labels: [['80', 924, false, 918], ['60', 938], ['40', 958], ['20', 977], ['0', 997, true], ['-20', 1017]],
                ticks: [928, 948, 968, 987, 1007, 1027],
              }}
            >
              <Line points={seriesPoints(trendSlow, 1015, 953)} color="#fa0434" width="2" />
              <Line points={seriesPoints(trendFast, 1016, 959)} color="#3030e4" width="2" />
            </Panel>
            <Panel
              size="h-[75px]"
              top={1046}
              height={73}
              axis={{
                labels: [['800', 1052, false, 1049], ['600', 1066], ['400', 1082]],
                ticks: [1058, 1074, 1091],
                tags: [
                  { text: '282.03', y: 1080, w: 36, color: '#ff9a10', tick: 1092 },
                  { text: '200', y: 1091, w: 21, color: '#1438e0', tick: 1099 },
                  { text: '203.08', y: 1099, w: 36, color: '#1414a8', tick: 1107 },
                  { text: '0', y: 1103, w: 9, color: '#9c1440', tick: 1116 },
                ],
              }}
            >
              {volumeTops.map((y, i) => {
                const up = volumeUp.has(i);
                return (
                  <rect key={i} x={barX(i) - 8.5} y={y + 0.5} width="18" height={Math.max(1116 - y, 0.5)} fill={up ? 'url(#blue)' : 'url(#crimson)'} stroke={up ? '#3a3ad8' : '#d83a6c'} />
                );
              })}
              <Line points={seriesPoints(volumeAverage, 1103, 1102)} color="#ff9a10" />
              <rect x="5" y="1098" width="1858" height="3" fill="#0428a8" />
              <rect x="5" y="1099" width="1858" height="1" fill="#1048ff" />
            </Panel>
            <Panel size="h-[22px]" top={1123} height={20} axis={{ ticks: [1129, 1136], tags: [{ text: '53.488', y: 1123, w: 47, color: '#fff', tick: 1133, big: true }] }}>
              <polygon points={`5,1143 ${seriesPoints(strength, 1140, 1133)} 1863,1143`} fill="#060645" />
              <Line points={seriesPoints(strength, 1140, 1133)} color="#f4f4f4" />
            </Panel>
            <svg className="-mt-[2px] block h-[21px] w-full" viewBox="4 1144 1912 21" preserveAspectRatio="none" textAnchor="middle">
              {dates.map(([i, text]) => {
                const month = text.length > 2;
                return (
                  <g key={i}>
                    <rect x={barX(i)} y="1144" width="1" height="4" fill="#77777b" />
                    <text x={barX(i)} y="1160" fill="#f0f0f8" fontSize={month ? 12 : 11} fontWeight={month ? 700 : 400}>{text}</text>
                  </g>
                );
              })}
            </svg>
          </main>
          <div className="border-t border-black">
            <div className="border-t border-[#77777b]">
              <BottomBar />
            </div>
          </div>
        </div>
      </div>
    </div>
  );
}
